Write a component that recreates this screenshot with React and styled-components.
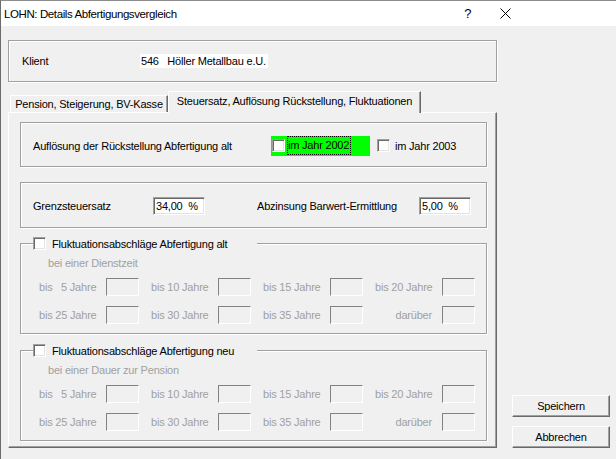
import React from 'react'
import styled, { createGlobalStyle } from 'styled-components'

const GlobalStyle = createGlobalStyle`
  html, body {
    margin: 0;
    padding: 0;
    background: #f0f0f0;
  }
  body {
    font-family: "Liberation Sans", Arial, sans-serif;
    font-size: 11px;
    letter-spacing: -0.2px;
    color: #000;
  }
`

const Window = styled.div`
  width: 616px;
  height: 459px;
  box-sizing: border-box;
  border-left: 1px solid #6b6b6b;
  border-top: 1px solid #8c8c8c;
  background: #f0f0f0;
  display: flex;
  flex-direction: column;
  overflow: hidden;
`

const TitleBar = styled.div`
  height: 25px;
  flex: none;
  background: #fff;
  display: flex;
  align-items: center;
  padding-left: 3px;
  font-size: 11.5px;
  letter-spacing: -0.4px;
`

const Title = styled.div`
  flex: 1;
`

const Help = styled.span`
  font-size: 13px;
  margin-right: 29px;
`

const Close = styled.svg`
  width: 11px;
  height: 11px;
  margin-right: 105px;
`

const Body = styled.div`
  flex: 1;
  display: flex;
  padding: 14px 0 11px 7px;
`

const Main = styled.div`
  width: 489px;
  display: flex;
  flex-direction: column;
`

const Side = styled.div`
  width: 98px;
  margin-left: 15px;
  display: flex;
  flex-direction: column;
  justify-content: flex-end;
  gap: 9px;
`

const Etched = styled.div`
  box-sizing: border-box;
  border: 1px solid #a0a0a0;
  box-shadow: 1px 1px 0 #fff, inset 1px 1px 0 #fff;
`

const KlientBox = styled(Etched)`
  height: 42px;
  display: flex;
  align-items: center;
  padding-left: 13px;
`

const KlientLabel = styled.span`
  width: 118px;
`

const KlientValue = styled.span`
  background: #fff;
  line-height: 14px;
  padding: 0 2px 0 1px;
  white-space: pre;
`

const TabStrip = styled.div`
  margin-top: 9px;
  height: 21px;
  display: flex;
  align-items: flex-end;
  padding-left: 2px;
`

const Tab = styled.div`
  box-sizing: border-box;
  width: ${p => p.$w}px;
  height: ${p => (p.$active ? 22 : 17)}px;
  display: flex;
  align-items: ${p => (p.$active ? 'flex-start' : 'center')};
  justify-content: center;
  padding-top: ${p => (p.$active ? 3 : 0)}px;
  border-top: 1px solid #fff;
  border-left: 1px solid #fff;
  border-right: 1px solid #696969;
  box-shadow: inset -1px 0 0 #a0a0a0;
  background: #f0f0f0;
  margin-bottom: ${p => (p.$active ? -1 : 0)}px;
  position: relative;
  white-space: nowrap;
`

const Panel = styled.div`
  box-sizing: border-box;
  height: 336px;
  border-top: 1px solid #fff;
  border-left: 1px solid #fff;
  border-right: 1px solid #696969;
  border-bottom: 1px solid #696969;
  box-shadow: inset -1px -1px 0 #a0a0a0;
  padding: 9px 9px 0 11px;
  display: flex;
  flex-direction: column;
`

const Group = styled(Etched)`
  width: 467px;
  height: ${p => p.$h}px;
  margin-top: ${p => p.$mt || 0}px;
  display: flex;
  align-items: center;
  padding: ${p => p.$pt || 0}px 0 0 12px;
`

const FieldLabel = styled.span`
  box-sizing: border-box;
  width: ${p => p.$w}px;
  padding-left: ${p => p.$pl || 0}px;
  flex: none;
`

const Box = styled.span`
  box-sizing: border-box;
  width: 13px;
  height: 13px;
  flex: none;
  background: #fff;
  border: 1px solid;
  border-color: #a0a0a0 #fff #fff #a0a0a0;
  box-shadow: inset 1px 1px 0 #696969, inset -1px -1px 0 #e3e3e3;
`

const Highlight = styled.div`
  width: 99px;
  height: 20px;
  background: #00ff00;
  display: flex;
  align-items: center;
  padding-left: 1px;
  box-sizing: border-box;
`

const Caption = styled.span`
  margin-left: ${p => p.$ml || 3}px;
  ${p => p.$focus && 'outline: 1px dotted #000; outline-offset: 0; padding: 2px 1px 2px 0; line-height: 13px;'}
`

const Check = styled.div`
  display: flex;
  align-items: center;
  margin-left: ${p => p.$ml || 0}px;
`

const Input = styled.div`
  box-sizing: border-box;
  width: 52px;
  height: 18px;
  flex: none;
  background: #fff;
  border: 1px solid;
  border-color: #a0a0a0 #fff #fff #a0a0a0;
  box-shadow: inset 1px 1px 0 #696969, inset -1px -1px 0 #e3e3e3;
  padding: 2px 0 0 2px;
  white-space: pre;
  line-height: 13px;
`

const Fieldset = styled.fieldset`
  box-sizing: border-box;
  width: 467px;
  margin: ${p => p.$mt}px 0 0 0;
  padding: 0 0 9px 0;
  min-inline-size: 0;
  border: 1px solid #a0a0a0;
  box-shadow: 1px 1px 0 #fff, inset 1px 1px 0 #fff;
`

const Legend = styled.legend`
  margin-left: 12px;
  padding: 0;
  width: 224px;
  height: 13px;
  background: #f0f0f0;
`

const LegendInner = styled.span`
  display: flex;
  align-items: center;
  height: 13px;
`

const SubLabel = styled.div`
  color: #a0a0a0;
  margin: 7px 0 0 27px;
  line-height: 13px;
`

const Rows = styled.div`
  margin: 8px 0 0 18px;
  display: grid;
  grid-template-columns: repeat(4, 112px);
  row-gap: 10px;
`

const Cell = styled.div`
  display: flex;
  align-items: center;
`

const CellLabel = styled.span`
  width: 67px;
  box-sizing: border-box;
  color: #a0a0a0;
  white-space: pre;
  text-align: ${p => (p.$right ? 'right' : 'left')};
  padding-right: ${p => (p.$right ? 10 : 0)}px;
`

const SmallInput = styled.span`
  box-sizing: border-box;
  width: 33px;
  height: 18px;
  border: 1px solid;
  border-color: #828282 #fff #fff #828282;
  background: #f0f0f0;
`

const Button = styled.button`
  box-sizing: border-box;
  width: 98px;
  height: 22px;
  padding: 0;
  font: inherit;
  letter-spacing: inherit;
  color: #000;
  background: #f0f0f0;
  border: 1px solid;
  border-color: #fff #696969 #696969 #fff;
  box-shadow: inset -1px -1px 0 #a0a0a0;
`

const durations = [
  ['bis   5 Jahre', 'bis 10 Jahre', 'bis 15 Jahre', 'bis 20 Jahre'],
  ['bis 25 Jahre', 'bis 30 Jahre', 'bis 35 Jahre', 'darüber'],
]

function Fluktuation({ title, sub, mt }) {
  return (
    <Fieldset $mt={mt}>
      <Legend>
        <LegendInner>
          <Box />
          <Caption $ml={6}>{title}</Caption>
        </LegendInner>
      </Legend>
      <SubLabel>{sub}</SubLabel>
      <Rows>
        {durations.flat().map(label => (
          <Cell key={label}>
            <CellLabel $right={label === 'darüber'}>{label}</CellLabel>
            <SmallInput />
          </Cell>
        ))}
      </Rows>
    </Fieldset>
  )
}

export default function App() {
  return (
    <>
      <GlobalStyle />
      <Window>
        <TitleBar>
          <Title>LOHN: Details Abfertigungsvergleich</Title>
          <Help>?</Help>
          <Close viewBox="0 0 11 11">
            <path d="M0.5 0.5 L10.5 10.5 M10.5 0.5 L0.5 10.5" stroke="#000" strokeWidth="1" fill="none" />
          </Close>
        </TitleBar>
        <Body>
          <Main>
            <KlientBox>
              <KlientLabel>Klient</KlientLabel>
              <KlientValue>{'546   Höller Metallbau e.U.'}</KlientValue>
            </KlientBox>
            <TabStrip>
              <Tab $w={158}>Pension, Steigerung, BV-Kasse</Tab>
              <Tab $w={253} $active>Steuersatz, Auflösung Rückstellung, Fluktuationen</Tab>
            </TabStrip>
            <Panel>
              <Group $h={45} $pt={2}>
                <FieldLabel $w={238}>Auflösung der Rückstellung Abfertigung alt</FieldLabel>
                <Highlight>
                  <Box />
                  <Caption $focus>im Jahr 2002</Caption>
                </Highlight>
                <Check $ml={7}>
                  <Box />
                  <Caption $ml={5}>im Jahr 2003</Caption>
                </Check>
              </Group>
              <Group $h={46} $mt={15} $pt={1}>
                <FieldLabel $w={120}>Grenzsteuersatz</FieldLabel>
                <Input>{'34,00  %'}</Input>
                <FieldLabel $w={214} $pl={52}>Abzinsung Barwert-Ermittlung</FieldLabel>
                <Input>{'5,00  %'}</Input>
              </Group>
              <Fluktuation mt={9} title="Fluktuationsabschläge Abfertigung alt" sub="bei einer Dienstzeit" />
              <Fluktuation mt={10} title="Fluktuationsabschläge Abfertigung neu" sub="bei einer Dauer zur Pension" />
            </Panel>
          </Main>
          <Side>
            <Button>Speichern</Button>
            <Button>Abbrechen</Button>
          </Side>
        </Body>
      </Window>
    </>
  )
}
